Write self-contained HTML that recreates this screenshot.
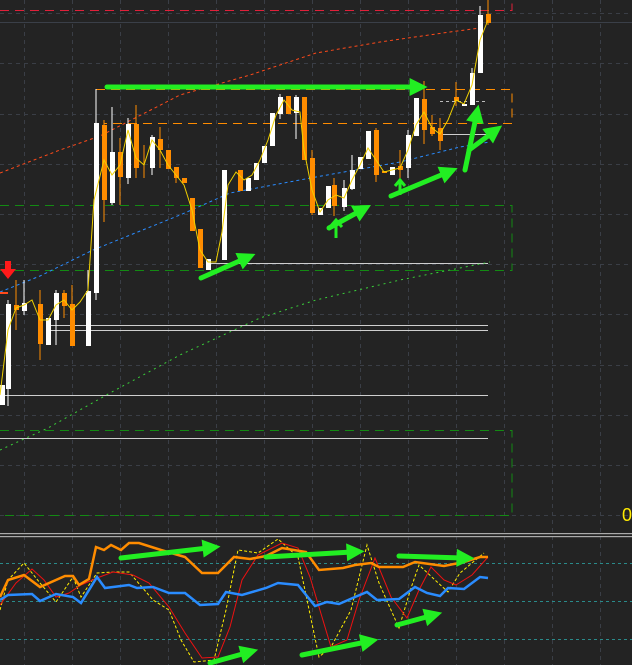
<!DOCTYPE html>
<html><head><meta charset="utf-8"><style>
html,body{margin:0;padding:0;background:#232323;overflow:hidden}
svg{display:block}
</style></head><body>
<svg width="632" height="665" viewBox="0 0 632 665" xmlns="http://www.w3.org/2000/svg">
<defs>
<marker id="ah" viewBox="0 0 10 10" refX="3" refY="5" markerWidth="4" markerHeight="3.6" orient="auto" markerUnits="strokeWidth"><path d="M0,0 L10,5 L0,10 z" fill="#22ee22"/></marker>
</defs>
<rect width="632" height="665" fill="#232323"/>
<g stroke="#3a3e46" stroke-width="1" stroke-dasharray="4,4">
<path d="M24.5 0V665M72.5 0V665M120.5 0V665M168.5 0V665M216.5 0V665M264.5 0V665M312.5 0V665M360.5 0V665M408.5 0V665M456.5 0V665M504.5 0V665M552.5 0V665M600.5 0V665"/>
<path d="M0 13.5H632M0 63.5H632M0 114.5H632M0 164.5H632M0 214.5H632M0 264.5H632M0 314.5H632M0 365.5H632M0 415.5H632M0 465.5H632M0 515.5H632"/>
</g>
<path d="M0 22.5H632" stroke="#3a3f48" stroke-width="1"/>
<path d="M0 10.5H512V0" stroke="#e0203a" stroke-width="1" stroke-dasharray="9,6" fill="none"/>
<path d="M96 89.5H512V123.5H104" stroke="#ff8c00" stroke-width="1" stroke-dasharray="9,6" fill="none"/>
<g stroke="#138a13" stroke-width="1" stroke-dasharray="9,6" fill="none">
<path d="M0 205.5H512V270.5H0"/>
<path d="M0 430.5H512V515.5H0"/>
</g>
<g stroke="#cfcfcf" stroke-width="1">
<path d="M210 263.5H488M50 325.5H488M50 330.5H488M0 395.5H488M0 438.5H488M440 134.5H488"/>
</g>
<path d="M440 101.5H488" stroke="#bbb" stroke-dasharray="3,3"/>
<polyline points="0,173 60,150 100,136 180,95 250,75 316,53 380,42 450,32 480,28" fill="none" stroke="#ff4a1a" stroke-width="1" stroke-dasharray="3,3"/>
<polyline points="0,292 40,276 93,250 180,215 230,193 316,177 400,162 460,147 490,142" fill="none" stroke="#2a8cff" stroke-width="1" stroke-dasharray="3,3"/>
<polyline points="0,450 48,428 110,393 180,355 260,318 316,300 400,280 490,262" fill="none" stroke="#3ad03a" stroke-width="1" stroke-dasharray="2,4"/>
<g stroke="#ff8c00" stroke-width="1">
<path d="M104 120V222M120 138V205M136 105V178M144 145V178M160 127V168M176 167V183M304 97V160M312 150V215M334 178V216M376 128V182M400 150V178M424 81V144M432 115V136M440 118V150M456 82V106M488 0V25M16 280V330M40 290V360M64 290V318M72 285V330"/>
</g>
<g stroke="#fff" stroke-width="1">
<path d="M96 89V300M112 107V205M128 118V184M152 135V175M280 94V119M296 95V139M344 180V211M352 155V190M408 130V178M472 68V105M480 6V73M8 300V406M24 280V315M56 290V345M88 270V305"/>
</g>
<g fill="#fff">
<rect x="94" y="123" width="5" height="170"/><rect x="110" y="152" width="5" height="51"/><rect x="126" y="124" width="5" height="54"/><rect x="150" y="137" width="5" height="31"/><rect x="206" y="259" width="5" height="11"/><rect x="222" y="170" width="5" height="90"/><rect x="246" y="178" width="5" height="13"/><rect x="254" y="163" width="5" height="17"/><rect x="262" y="146" width="5" height="17"/><rect x="270" y="113" width="5" height="33"/><rect x="278" y="97" width="5" height="17"/><rect x="294" y="97" width="5" height="16"/><rect x="318" y="208" width="5" height="7"/><rect x="326" y="186" width="5" height="22"/><rect x="342" y="188" width="5" height="19"/><rect x="350" y="170" width="5" height="19"/><rect x="358" y="157" width="5" height="12"/><rect x="366" y="131" width="5" height="28"/><rect x="390" y="167" width="5" height="8"/><rect x="406" y="135" width="5" height="33"/><rect x="414" y="98" width="5" height="38"/><rect x="462" y="104" width="5" height="2"/><rect x="470" y="73" width="5" height="32"/><rect x="478" y="15" width="5" height="58"/><rect x="0" y="385" width="5" height="20"/><rect x="6" y="304" width="5" height="85"/><rect x="22" y="303" width="5" height="8"/><rect x="46" y="318" width="5" height="27"/><rect x="54" y="293" width="5" height="27"/><rect x="86" y="291" width="5" height="55"/>
</g>
<g fill="#ff8c00">
<rect x="102" y="125" width="5" height="75"/><rect x="118" y="152" width="5" height="25"/><rect x="134" y="124" width="5" height="44"/><rect x="158" y="139" width="5" height="11"/><rect x="166" y="150" width="5" height="19"/><rect x="174" y="167" width="5" height="11"/><rect x="182" y="178" width="5" height="5"/><rect x="190" y="198" width="5" height="33"/><rect x="198" y="229" width="5" height="39"/><rect x="238" y="170" width="5" height="21"/><rect x="286" y="96" width="5" height="18"/><rect x="302" y="97" width="5" height="63"/><rect x="310" y="158" width="5" height="55"/><rect x="332" y="185" width="5" height="21"/><rect x="374" y="130" width="5" height="45"/><rect x="398" y="166" width="5" height="4"/><rect x="422" y="99" width="5" height="31"/><rect x="430" y="127" width="5" height="7"/><rect x="438" y="128" width="5" height="13"/><rect x="454" y="97" width="5" height="4"/><rect x="486" y="14" width="5" height="9"/><rect x="14" y="305" width="5" height="5"/><rect x="38" y="304" width="5" height="40"/><rect x="62" y="293" width="5" height="13"/><rect x="70" y="304" width="5" height="42"/><rect x="382" y="171" width="5" height="2"/>
</g>
<rect x="0" y="292" width="8" height="2" fill="#ff4a1a"/>
<polyline points="0,395 8,330 16,308 24,305 32,300 40,320 48,320 56,305 64,300 72,310 80,302 88,290 94,200 104,160 112,175 120,165 128,130 136,158 144,165 152,140 160,150 168,165 176,175 184,185 192,210 200,250 208,262 216,262 222,232 228,185 236,172 244,180 252,175 260,160 268,140 276,115 284,100 292,110 300,112 304,150 312,190 320,212 328,200 336,195 344,198 352,180 360,165 368,148 376,160 384,172 392,170 400,168 408,150 416,125 424,112 432,128 440,134 448,120 456,100 464,104 472,85 480,40 488,20" fill="none" stroke="#f0d000" stroke-width="1"/>
<path d="M5 261H11V269H16L8 279L0 269H5Z" fill="#ff1a1a"/>
<g stroke="#22ee22" stroke-width="5" stroke-linecap="round" fill="none" marker-end="url(#ah)">
<path d="M107 87H415"/>
<path d="M201 278L244 259"/>
<path d="M329 228L360 211"/>
<path d="M391 196L446 173"/>
<path d="M465 170L476 117"/>
<path d="M469 150L492 133"/>
</g>
<g stroke="#22ee22" stroke-width="3" fill="none">
<path d="M336 238V222M330 227L336 220L342 227"/>
<path d="M400 195V181M395 186L400 180L405 186"/>
</g>
<text x="622" y="521" font-family="Liberation Sans, sans-serif" font-size="18" fill="#ffea00">0</text>
<rect x="0" y="533" width="632" height="1.2" fill="#aaa"/>
<rect x="0" y="536" width="632" height="1.2" fill="#aaa"/>
<g stroke="#2a8a8a" stroke-width="1" stroke-dasharray="3,3">
<path d="M0 563.5H632M0 601.5H632M0 639.5H632"/>
</g>
<polyline points="0,610 8,580 24,563 40,583 56,602 73,577 81,597 97,573 113,572 129,572 153,600 169,610 181,640 194,662 214,660 226,610 238,550 258,553 278,539 298,557 319,657 331,647 351,610 367,545 379,583 399,628 411,588 419,565 435,580 448,592 460,573 484,553" fill="none" stroke="#ffee00" stroke-width="1" stroke-dasharray="3,2"/>
<polyline points="0,605 16,583 32,569 44,580 56,597 69,593 81,585 97,578 113,572 133,575 149,583 169,607 185,633 202,658 218,657 230,627 242,580 258,555 282,543 298,548 310,577 331,647 347,640 359,600 375,558 391,597 407,618 419,590 431,567 444,580 456,585 472,575 488,557" fill="none" stroke="#ee1111" stroke-width="1"/>
<polyline points="0,597 8,580 24,575 40,587 65,576 73,576 79,585 89,579 96,547 104,550 111,545 121,550 129,543 139,543 161,550 185,557 202,573 218,573 234,557 250,559 266,556 282,548 306,552 319,570 343,568 355,565 371,563 379,567 403,567 415,562 444,566 464,562 480,557 488,557" fill="none" stroke="#ff8c00" stroke-width="2.5"/>
<polyline points="0,600 8,595 32,594 40,601 56,594 73,597 81,603 97,577 105,588 129,585 137,588 153,587 169,593 185,593 200,605 218,604 226,592 242,595 266,588 278,583 298,585 315,606 327,602 339,604 355,597 367,592 377,600 399,599 415,587 427,593 440,596 448,588 464,589 480,577 488,578" fill="none" stroke="#2a8cff" stroke-width="2.5"/>
<g stroke="#22ee22" stroke-width="5" stroke-linecap="round" fill="none" marker-end="url(#ah)">
<path d="M121 558L208 548"/>
<path d="M266 557L352 552"/>
<path d="M399 556L462 558"/>
<path d="M210 663L246 653"/>
<path d="M302 655L366 642"/>
<path d="M397 625L430 616"/>
</g>
</svg>
</body></html>
